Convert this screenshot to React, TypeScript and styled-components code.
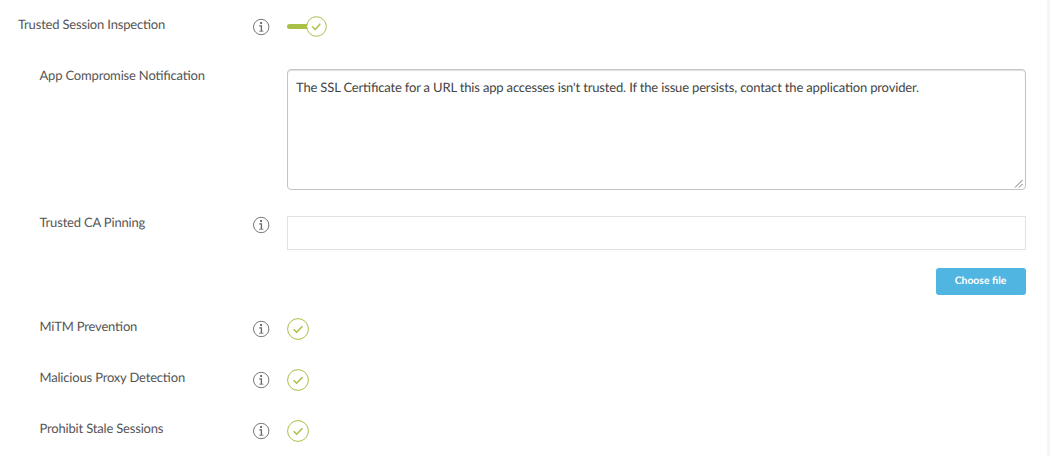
import React, { useState } from 'react';
import styled, { createGlobalStyle } from 'styled-components';

const GREEN = '#a9c046'

const DEFAULT_MESSAGE = "The SSL Certificate for a URL this app accesses isn't trusted. If the issue persists, contact the application provider."

export default function App() {
  const [message, setMessage] = useState(DEFAULT_MESSAGE)

  return (
    <>
      <GlobalStyle />
      <Page>
        <SettingRow $height={51}>
          <Label>Trusted Session Inspection</Label>
          <InfoIcon />
          <ToggleSwitch />
        </SettingRow>

        <SettingRow $height={147}>
          <Label $nested>App Compromise Notification</Label>
          <span />
          <MessageField>
            <Message value={message} onChange={e => setMessage(e.target.value)} />
            <ResizeGrip width="10" height="10" viewBox="0 0 10 10">
              <path d="M1 8.5 L8.5 1 M5 8.5 L8.5 5" />
            </ResizeGrip>
          </MessageField>
        </SettingRow>

        <SettingRow $height={104}>
          <Label $nested>Trusted CA Pinning</Label>
          <InfoIcon />
          <FileField>
            <FileInput type="text" />
            <FileButton>Choose file</FileButton>
          </FileField>
        </SettingRow>

        <CheckRow label="MiTM Prevention" />
        <CheckRow label="Malicious Proxy Detection" />
        <CheckRow label="Prohibit Stale Sessions" />
      </Page>
    </>
  );
}

type CheckRowProps = { label: string }
function CheckRow(props: CheckRowProps) {
  return (
    <SettingRow $height={51}>
      <Label $nested>{props.label}</Label>
      <InfoIcon />
      <CheckIcon width="22" height="22" viewBox="0 0 22 22">
        <circle cx="11" cy="11" r="10.4" />
        <path d="M6.6 11.2 L9.7 14.2 L15.4 8.3" strokeWidth="1.6" />
      </CheckIcon>
    </SettingRow>
  )
}

function ToggleSwitch() {
  return (
    <Switch>
      <SwitchTrack />
      <SwitchKnob width="21" height="21" viewBox="0 0 21 21">
        <circle cx="10.5" cy="10.5" r="9.8" />
        <path d="M6.1 10.6 L9.2 13.5 L14.3 7.7" strokeWidth="1.4" />
      </SwitchKnob>
    </Switch>
  )
}

function InfoIcon() {
  return (
    <Info width="17" height="18" viewBox="0 0 17 18">
      <circle cx="8.2" cy="9" r="7.7" fill="none" stroke="#777" strokeWidth="1" />
      <circle cx="8.1" cy="5" r="1.1" fill="#555" />
      <path d="M6.3 7.9 H8.4 V13.2" fill="none" stroke="#666" strokeWidth="1.3" />
      <path d="M6.2 13.2 H10.4" fill="none" stroke="#777" strokeWidth="0.9" />
    </Info>
  )
}

const GlobalStyle = createGlobalStyle`
  * {
    box-sizing: border-box;
  }

  body {
    margin: 0;
    background: #fff;
    color: #555;
    font-family: Lato, sans-serif;
    font-size: 13px;
    font-feature-settings: 'liga' 1;
    letter-spacing: -0.18px;
    text-rendering: geometricPrecision;
  }
`

const Page = styled.main`
  height: 456px;
  width: 1050px;
  padding-right: 21px;
  border-right: 3px solid #f5f5f5;
  overflow: hidden;
`

const SettingRow = styled.div<{ $height: number }>`
  display: grid;
  grid-template-columns: 253px 34px 739px;
  align-items: start;
  height: ${props => props.$height}px;
`

const Label = styled.label<{ $nested?: boolean }>`
  padding: 16px 0 0 ${props => (props.$nested ? '39.5px' : '18px')};
  line-height: 16px;
`

const Info = styled.svg`
  display: block;
  margin-top: 18px;
`

const CheckIcon = styled.svg`
  display: block;
  margin-top: 16px;
  fill: none;
  stroke: ${GREEN};
`

const Switch = styled.div`
  display: flex;
  align-items: center;
  margin-top: 16px;
`

const SwitchTrack = styled.div`
  width: 20px;
  height: 5px;
  border-radius: 2.5px 0 0 2.5px;
  background: ${GREEN};
`

const SwitchKnob = styled.svg`
  margin-left: -1px;
  fill: #fff;
  stroke: ${GREEN};
`

const MessageField = styled.div`
  position: relative;
  margin-top: 18px;
`

const Message = styled.textarea`
  display: block;
  width: 739px;
  height: 121px;
  padding: 8px;
  border: 1px solid #c4c4c4;
  border-radius: 4px;
  outline: none;
  background: #fff;
  box-shadow: inset 0 1px 1px rgba(0, 0, 0, 0.12);
  color: #444;
  font: inherit;
  font-feature-settings: 'liga' 1;
  letter-spacing: -0.165px;
  line-height: 18px;
  text-rendering: inherit;
  resize: none;
`

const ResizeGrip = styled.svg`
  position: absolute;
  right: 2px;
  bottom: 1px;
  fill: none;
  stroke: #777;
  pointer-events: none;
`

const FileField = styled.div`
  display: flex;
  flex-direction: column;
  align-items: flex-end;
  gap: 18px;
  padding-top: 18px;
`

const FileInput = styled.input`
  width: 100%;
  height: 34px;
  border: 1px solid #e2e2e2;
  outline: none;
`

const FileButton = styled.button`
  width: 90px;
  height: 27px;
  padding: 0 1px 2px 0;
  border: 0;
  border-radius: 3px;
  background: #50b5e0;
  color: #fff;
  font-family: inherit;
  font-size: 10.4px;
  font-weight: 700;
  text-rendering: inherit;
`
